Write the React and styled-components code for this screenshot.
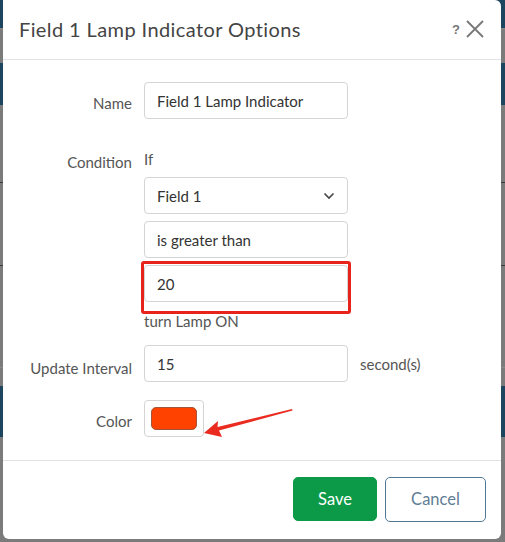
import React from "react";
import styled, { createGlobalStyle } from "styled-components";

const GlobalStyle = createGlobalStyle`
  html, body {
    margin: 0;
    padding: 0;
  }
  body {
    font-family: "Source Sans Pro", "Lato", "Noto Sans", sans-serif;
  }
`;

// Dimmed page behind the dialog
const Backdrop = styled.div`
  width: 505px;
  height: 542px;
  box-sizing: border-box;
  padding: 0 4px 3px 3px;
  background:
    linear-gradient(
      to bottom,
      #1d4560 0px,
      #1d4560 28px,
      #8a8a8a 28px,
      #7b7b7b 30px,
      #7b7b7b 63px,
      #1d4560 63px,
      #1d4560 105px,
      #7b7b7b 105px,
      #7b7b7b 182px,
      #3a3a3a 182px,
      #3a3a3a 183px,
      #7b7b7b 183px,
      #7b7b7b 265px,
      #3a3a3a 265px,
      #3a3a3a 266px,
      #7b7b7b 266px,
      #7b7b7b 367px,
      #888 367px,
      #888 368px,
      #7b7b7b 368px,
      #7b7b7b 386px,
      #1d4560 386px,
      #1d4560 437px,
      #7b7b7b 437px
    );
`;

const Dialog = styled.div`
  height: 100%;
  background: #fff;
  border-radius: 0 6px 6px 6px;
  display: flex;
  flex-direction: column;
  overflow: hidden;
`;

const Header = styled.div`
  height: 60px;
  box-sizing: border-box;
  display: flex;
  align-items: center;
  justify-content: space-between;
  padding: 0 17px 2px 16px;
  border-bottom: 1px solid #e2e2e2;
`;

const Title = styled.h2`
  margin: 0;
  font-family: "Lato", "Open Sans", sans-serif;
  font-weight: 400;
  font-size: 20px;
  letter-spacing: 0.4px;
  color: #444;
`;

const HeaderTools = styled.div`
  display: flex;
  align-items: center;
  gap: 6px;
  color: #777;
`;

const Help = styled.span`
  font-family: "Liberation Sans", sans-serif;
  font-weight: 700;
  font-size: 13px;
  color: #777;
  margin-top: 2px;
`;

const Body = styled.div`
  flex: 1;
  padding: 22px 0 0 0;
  display: flex;
  flex-direction: column;
`;

const Row = styled.div`
  display: grid;
  grid-template-columns: 129px 204px auto;
  column-gap: 12px;
  align-items: ${(p) => (p.$top ? "start" : "center")};
  margin-bottom: ${(p) => p.$gap || 0}px;
`;

const Label = styled.label`
  text-align: right;
  font-size: 15px;
  color: #555;
  padding-top: ${(p) => p.$pt || 0}px;
`;

const Stack = styled.div`
  display: flex;
  flex-direction: column;
  gap: 7px;
`;

const Plain = styled.div`
  font-size: 15px;
  color: #555;
  line-height: 18px;
  margin-top: ${(p) => p.$mt || 0}px;
  margin-bottom: ${(p) => p.$mb || 0}px;
`;

const Input = styled.div`
  height: 37px;
  box-sizing: border-box;
  border: 1px solid #d4d4d4;
  border-radius: 4px;
  padding: 0 12px;
  display: flex;
  align-items: center;
  justify-content: space-between;
  font-size: 15px;
  color: #333;
  background: #fff;
`;

const Marked = styled.div`
  margin: -4px -3px 0 -3px;
  padding: 1px 0 0 0;
  height: 53px;
  box-sizing: border-box;
  border: 3px solid #e8231c;
  border-radius: 3px;
`;

const Suffix = styled.span`
  font-size: 15px;
  color: #555;
`;

const SwatchCell = styled.div`
  position: relative;
  height: 37px;
`;

const Swatch = styled.div`
  width: 60px;
  height: 37px;
  box-sizing: border-box;
  border: 1px solid #d4d4d4;
  border-radius: 4px;
  padding: 6px;

  span {
    display: block;
    height: 100%;
    background: #ff4200;
    border: 1px solid #a2553a;
    border-radius: 5px;
    box-sizing: border-box;
  }
`;

const Arrow = styled.svg`
  position: absolute;
  left: 58px;
  top: 6px;
`;

const Footer = styled.div`
  height: 79px;
  box-sizing: border-box;
  border-top: 1px solid #e2e2e2;
  display: flex;
  justify-content: flex-end;
  align-items: center;
  gap: 8px;
  padding: 0 15px 2px 0;
`;

const Button = styled.button`
  height: ${(p) => (p.$primary ? 44 : 45)}px;
  width: ${(p) => (p.$primary ? 84 : 101)}px;
  box-sizing: border-box;
  border-radius: 5px;
  font-family: "Lato", "Open Sans", sans-serif;
  font-size: 16.5px;
  cursor: pointer;
  background: ${(p) => (p.$primary ? "#0c9a48" : "#fff")};
  color: ${(p) => (p.$primary ? "#fff" : "#5f7d95")};
  border: 1px solid ${(p) => (p.$primary ? "#0c9a48" : "#517893")};
`;

export default function App() {
  return (
    <>
      <GlobalStyle />
      <Backdrop>
        <Dialog>
          <Header>
            <Title>Field 1 Lamp Indicator Options</Title>
            <HeaderTools>
              <Help>?</Help>
              <svg width="18" height="18" viewBox="0 0 18 18">
                <path d="M1 1 L17 17 M17 1 L1 17" stroke="#777" strokeWidth="1.8" fill="none" />
              </svg>
            </HeaderTools>
          </Header>
          <Body>
            <Row $gap={31}>
              <Label $pt={4}>Name</Label>
              <Input>Field 1 Lamp Indicator</Input>
            </Row>
            <Row $top $gap={15}>
              <Label $pt={3}>Condition</Label>
              <Stack>
                <Plain $mb={2}>If</Plain>
                <Input>
                  Field 1
                  <svg width="12" height="8" viewBox="0 0 12 8">
                    <path d="M1.5 1.5 L6 6 L10.5 1.5" stroke="#444" strokeWidth="1.6" fill="none" />
                  </svg>
                </Input>
                <Input>is greater than</Input>
                <Marked>
                  <Input>20</Input>
                </Marked>
                <Plain $mt={-9}>turn Lamp ON</Plain>
              </Stack>
            </Row>
            <Row $gap={18}>
              <Label $pt={8}>Update Interval</Label>
              <Input>15</Input>
              <Suffix>second(s)</Suffix>
            </Row>
            <Row>
              <Label $pt={5}>Color</Label>
              <SwatchCell>
                <Swatch>
                  <span />
                </Swatch>
                <Arrow width="92" height="32" viewBox="0 0 92 32">
                  <path
                    d="M2 27 L16 15 L15.5 21 L90 3 L90.5 4.5 L17 24.5 L20 31 Z"
                    fill="#ea2b20"
                  />
                </Arrow>
              </SwatchCell>
            </Row>
          </Body>
          <Footer>
            <Button $primary>Save</Button>
            <Button>Cancel</Button>
          </Footer>
        </Dialog>
      </Backdrop>
    </>
  );
}
